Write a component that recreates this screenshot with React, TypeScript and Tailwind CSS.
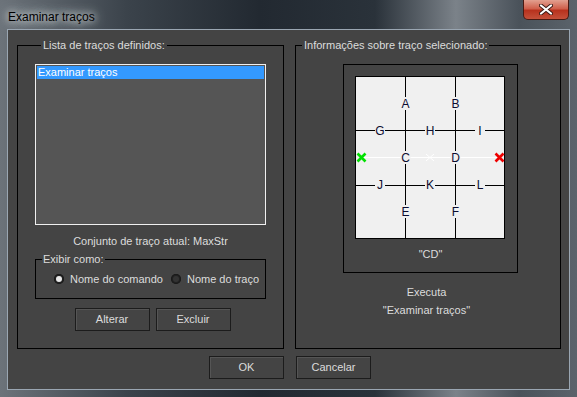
import React from 'react';

const font = "font-['Liberation_Sans',Arial,sans-serif]";

const Letter: React.FC<{ x: number; y: number; ch: string }> = ({ x, y, ch }) => (
  <g>
    <rect x={x - 5} y={y - 7} width={10} height={13} fill="#f0f0f0" />
    <text
      x={x}
      y={y + 4}
      textAnchor="middle"
      fontSize="12"
      fontFamily="Liberation Sans, Arial, sans-serif"
      fill="#0c0c30"
    >
      {ch}
    </text>
  </g>
);

const StrokeGrid: React.FC = () => (
  <svg width="150" height="163" className="block">
    <rect x="0.5" y="0.5" width="149" height="162" fill="#f0f0f0" stroke="#000" />
    {/* grid lines */}
    <line x1="50.5" y1="0" x2="50.5" y2="163" stroke="#000" />
    <line x1="100.5" y1="0" x2="100.5" y2="163" stroke="#000" />
    <line x1="0" y1="54.5" x2="150" y2="54.5" stroke="#000" />
    <line x1="0" y1="109.5" x2="150" y2="109.5" stroke="#000" />
    {/* stroke path */}
    <line x1="7" y1="81.5" x2="145" y2="81.5" stroke="#fff" />
    <Letter x={50.5} y={28} ch="A" />
    <Letter x={100.5} y={28} ch="B" />
    <Letter x={25} y={55} ch="G" />
    <Letter x={75} y={55} ch="H" />
    <Letter x={125} y={55} ch="I" />
    <Letter x={50.5} y={82} ch="C" />
    <Letter x={100.5} y={82} ch="D" />
    <Letter x={25} y={109} ch="J" />
    <Letter x={75} y={109} ch="K" />
    <Letter x={125} y={109} ch="L" />
    <Letter x={50.5} y={136} ch="E" />
    <Letter x={100.5} y={136} ch="F" />
    {/* start / mid / end markers */}
    <path d="M2.5 77.5 L10.5 85.5 M10.5 77.5 L2.5 85.5" stroke="#00e000" strokeWidth="2.6" />
    <path d="M71 78 L79 85 M79 78 L71 85" stroke="#fff" strokeWidth="1" />
    <path d="M140.5 77.5 L148.5 85.5 M148.5 77.5 L140.5 85.5" stroke="#ee0000" strokeWidth="2.6" />
  </svg>
);

const Radio: React.FC<{ checked?: boolean; label: string }> = ({ checked, label }) => (
  <label className="flex items-center gap-[6px]">
    <span className="w-[10px] h-[10px] rounded-full bg-[#222] flex items-center justify-center shadow-[inset_0_0_0_1px_#1a1a1a]">
      {checked && <span className="w-[6px] h-[6px] rounded-full bg-[#e8e8e8]" />}
      {!checked && <span className="w-[6px] h-[6px] rounded-full bg-[#333]" />}
    </span>
    <span>{label}</span>
  </label>
);

const Btn: React.FC<{ children: React.ReactNode }> = ({ children }) => (
  <button className="w-[75px] h-[23px] bg-[#444] border border-[#1c1c1c] shadow-[inset_1px_1px_0_#555] text-[#dcdcdc] text-[11px]">
    {children}
  </button>
);

export default function App() {
  return (
    <div
      className={`${font} w-[577px] h-[397px] overflow-hidden flex flex-col bg-[linear-gradient(90deg,#6c737a_0%,#3b434b_22%,#222931_45%,#2a323a_65%,#7b8289_79%,#4a525a_90%,#5b636b_100%)] text-[11px] text-[#dcdcdc]`}
    >
      {/* Title bar */}
      <div className="h-[29px] flex items-start justify-between shrink-0">
        <span className="ml-[8px] mt-[8px] text-[12px] text-black [text-shadow:0_0_6px_#c9cdd1,0_0_10px_#c9cdd1,0_0_14px_#c9cdd1]">
          Examinar traços
        </span>
        <div className="mr-[8px] w-[46px] h-[20px] rounded-b-[5px] border border-t-0 border-[#4a1a12] bg-[linear-gradient(180deg,#e2a090_0%,#d0604c_45%,#b8321e_55%,#c4503a_100%)] flex items-center justify-center">
          <svg width="14" height="11" viewBox="0 0 14 11">
            <path d="M2 1.5 L12 9.5 M12 1.5 L2 9.5" stroke="#3a1a14" strokeWidth="4" strokeLinecap="round" />
            <path d="M2 1.5 L12 9.5 M12 1.5 L2 9.5" stroke="#fff" strokeWidth="2.2" strokeLinecap="round" />
          </svg>
        </div>
      </div>

      {/* Client area */}
      <div className="mx-[7px] mb-[7px] flex-1 border border-[#9aa6b2] bg-[#a0acb8] p-0">
        <div className="w-full h-full bg-[#444444] flex flex-col">
          <div className="flex pt-[8px] pl-[9px] gap-[11px]">
            {/* Left group */}
            <fieldset className="w-[267px] h-[311px] border border-black px-[17px]">
              <legend className="ml-[6px] px-[2px] leading-[14px]">Lista de traços definidos:</legend>
              <div className="mt-[12px] h-[161px] border border-[#f0f0f0] bg-[#555555] p-[1px]">
                <div className="h-[13px] bg-[#3399ff] text-white leading-[13px] pl-[1px]">Examinar traços</div>
              </div>
              <div className="text-center mt-[10px] leading-[13px]">Conjunto de traço atual: MaxStr</div>
              <fieldset className="mt-[5px] h-[46px] border border-black">
                <legend className="ml-[6px] px-[1px] leading-[13px]">Exibir como:</legend>
                <div className="flex items-center gap-[8px] pl-[18px] mt-[5px]">
                  <Radio checked label="Nome do comando" />
                  <Radio label="Nome do traço" />
                </div>
              </fieldset>
              <div className="flex justify-center gap-[6px] mt-[9px] pl-[4px]">
                <Btn>Alterar</Btn>
                <Btn>Excluir</Btn>
              </div>
            </fieldset>

            {/* Right group */}
            <fieldset className="w-[266px] h-[311px] border border-black">
              <legend className="ml-[6px] px-[2px] leading-[14px]">Informações sobre traço selecionado:</legend>
              <div className="mt-[12px] ml-[47px] w-[175px] h-[209px] border border-black flex flex-col items-center">
                <div className="mt-[11px] mr-[1px]">
                  <StrokeGrid />
                </div>
                <div className="mt-[9px] leading-[13px]">"CD"</div>
              </div>
              <div className="text-center mt-[10px] leading-[18px] pr-[3px]">
                <div>Executa</div>
                <div>"Examinar traços"</div>
              </div>
            </fieldset>
          </div>

          <div className="flex gap-[12px] pl-[201px] mt-[7px]">
            <Btn>OK</Btn>
            <Btn>Cancelar</Btn>
          </div>
        </div>
      </div>
    </div>
  );
}
